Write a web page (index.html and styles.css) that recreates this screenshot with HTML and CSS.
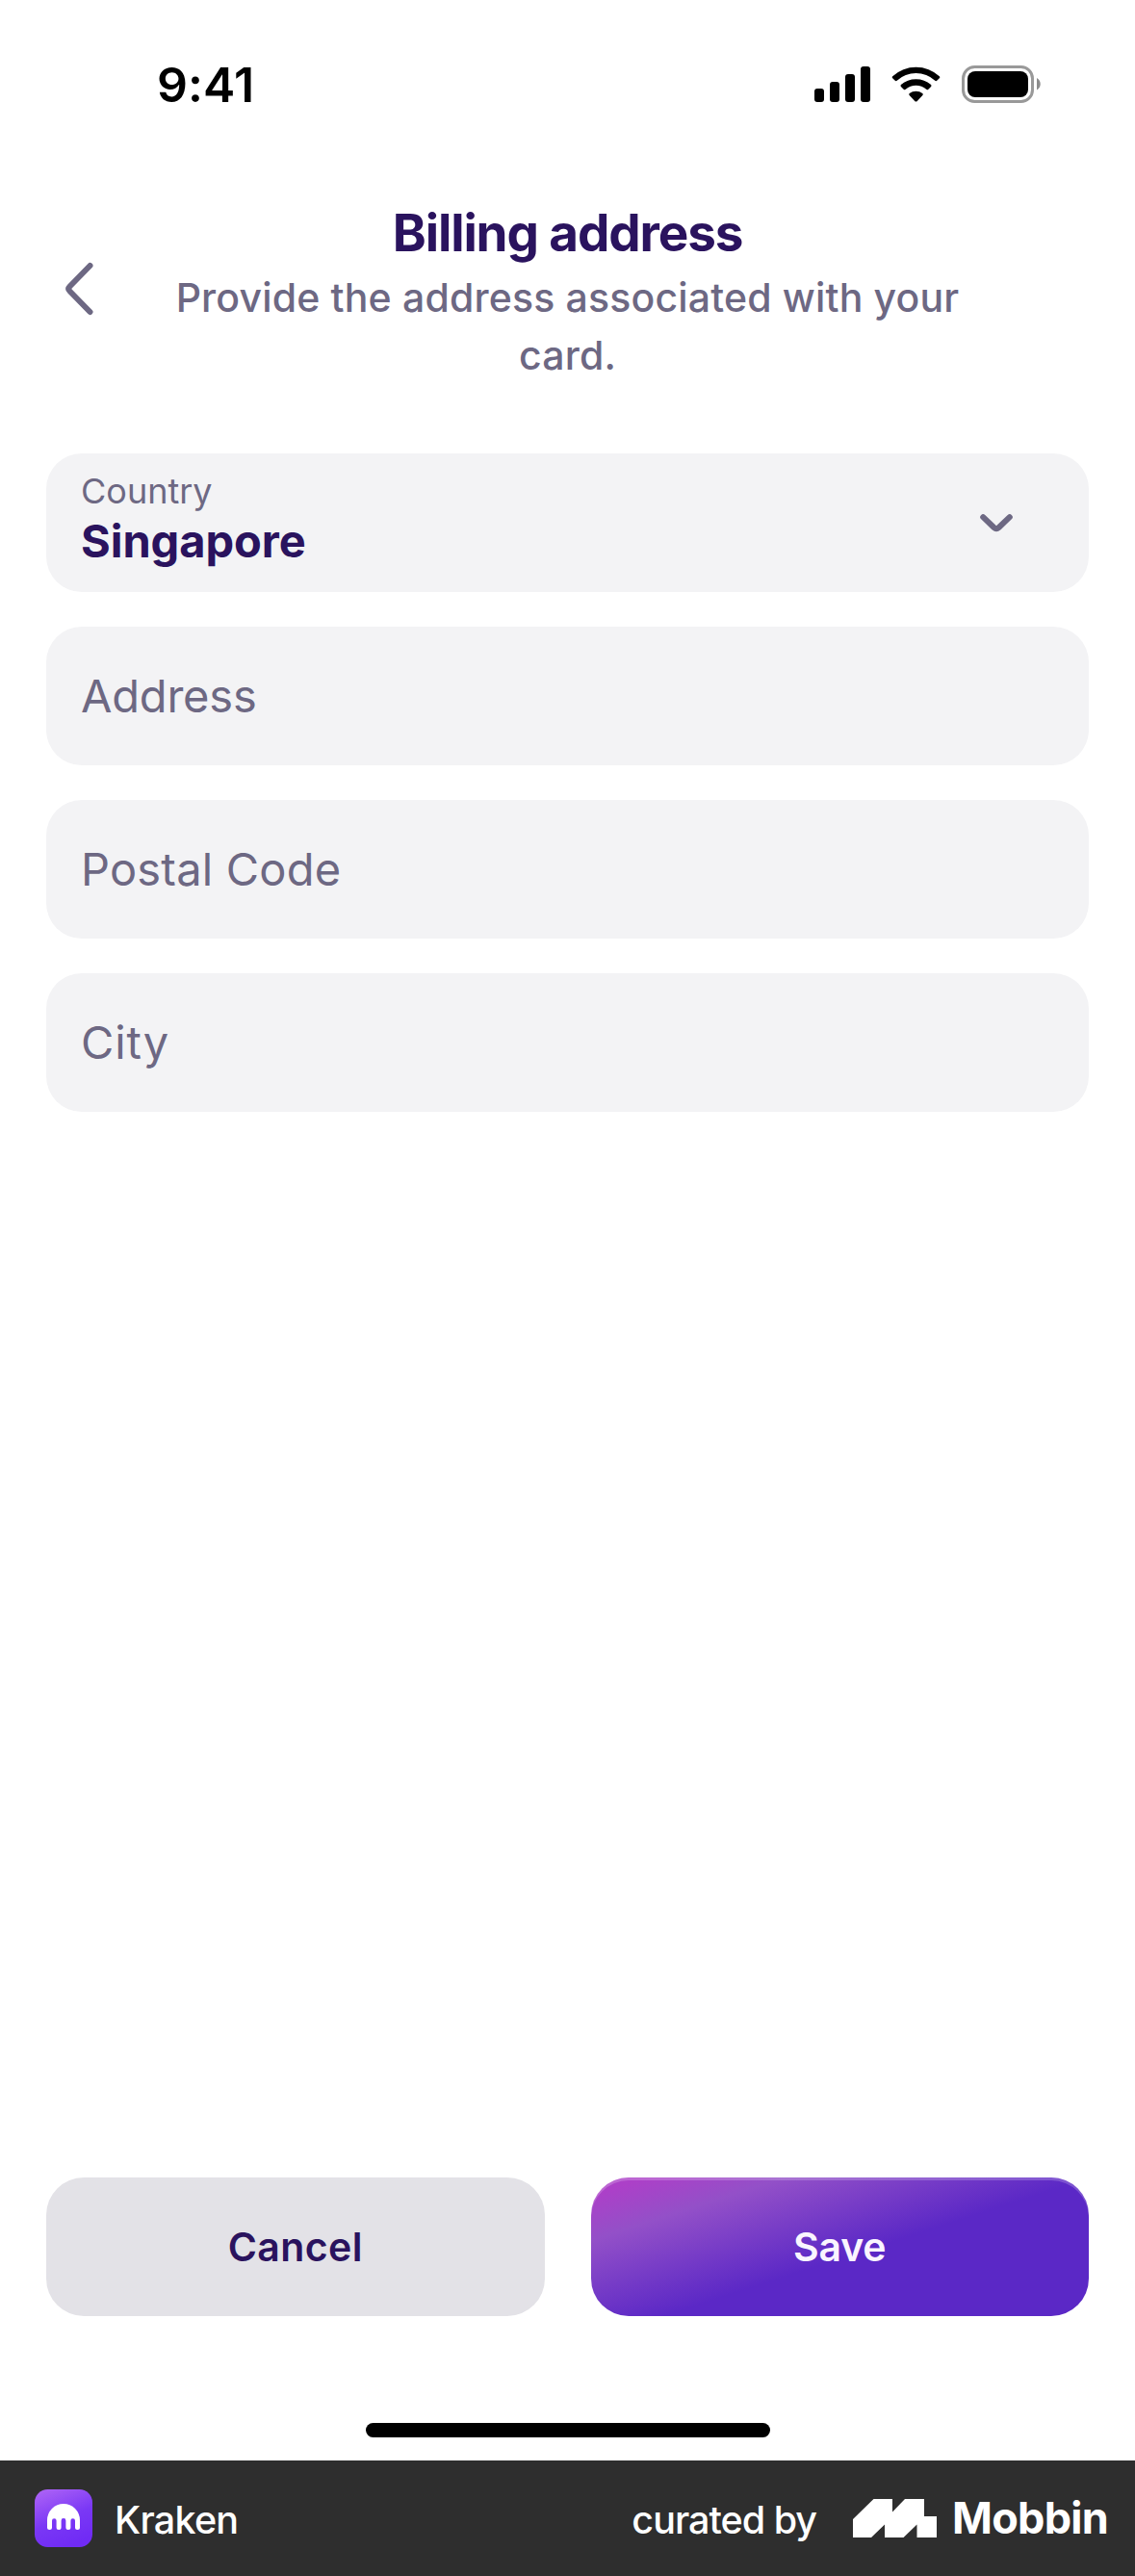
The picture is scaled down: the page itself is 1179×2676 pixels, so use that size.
FILE: index.html
```html
<!DOCTYPE html>
<html lang="en">
<head>
<meta charset="utf-8">
<title>Billing address</title>
<link rel="stylesheet" href="styles.css">
</head>
<body>
<div class="screen">
  <div class="status-bar">
    <div class="time">9:41</div>
    <svg class="status-icons" width="236" height="40" viewBox="0 0 236 40" aria-hidden="true">
      <rect x="0" y="24" width="10" height="14" rx="3"/>
      <rect x="16" y="17" width="10" height="21" rx="3"/>
      <rect x="32" y="9" width="10" height="29" rx="3"/>
      <rect x="48" y="1" width="10" height="37" rx="3"/>
      <path d="M81.200 11.200 A36 36 0 0 1 129.800 11.200 Q130.800 12.200 129.800 13.200 L127.200 15.800 Q126.300 16.600 125.300 15.700 A29.500 29.500 0 0 0 85.700 15.700 Q84.700 16.600 83.800 15.800 L81.200 13.200 Q80.200 12.200 81.200 11.200 Z"/>
      <path d="M89.900 20.100 A23.500 23.500 0 0 1 121.100 20.100 Q122 21.100 121.100 22 L118.100 24.900 Q117.200 25.700 116.200 24.800 A16.500 16.500 0 0 0 94.800 24.800 Q93.800 25.700 92.900 24.900 L89.900 22 Q89 21.100 89.900 20.100 Z"/>
      <path d="M98.700 29 A11 11 0 0 1 112.300 29 Q113.300 30 112.400 31 L106.500 37.200 Q105.500 38 104.500 37.200 L98.600 31 Q97.700 30 98.700 29 Z"/>
      <rect x="154.500" y="1.500" width="72" height="36" rx="12" fill="none" stroke="#999" stroke-width="3"/>
      <rect x="159" y="6" width="63" height="27" rx="8"/>
      <path d="M231 13 C236 15.500 236 23 231 25.500 Z" fill="#8c8c8c"/>
    </svg>
  </div>

  <header class="header">
    <svg class="back" width="33" height="58" viewBox="0 0 33 58" aria-label="Back">
      <path d="M27.500 5 L6.500 26.500 Q4 29 6.500 31.500 L27.500 53"/>
    </svg>
    <div class="heading">
      <h1 class="title">Billing address</h1>
      <p class="subtitle">Provide the address associated with your<br>card.</p>
    </div>
  </header>

  <main class="form">
    <div class="field field-select">
      <div class="select-text">
        <div class="label">Country</div>
        <div class="value">Singapore</div>
      </div>
      <svg class="caret" width="34" height="20" viewBox="0 0 34 20" aria-hidden="true">
        <path d="M3.200 4.200 L14.500 15 Q17 17.200 19.500 15 L30.800 4.200"/>
      </svg>
    </div>
    <div class="field address">Address</div>
    <div class="field postal">Postal Code</div>
    <div class="field city">City</div>
  </main>

  <div class="actions">
    <div class="button cancel">Cancel</div>
    <div class="button save">Save</div>
  </div>
  <div class="home-indicator"></div>
</div>

<footer class="footer">
  <svg class="app-icon" width="60" height="60" viewBox="0 0 60 60" aria-hidden="true">
    <defs>
      <linearGradient id="app" x1="0.150" y1="0" x2="0.550" y2="1">
        <stop offset="0" stop-color="#ac62f6"/>
        <stop offset="0.550" stop-color="#7a38f5"/>
        <stop offset="1" stop-color="#702bf5"/>
      </linearGradient>
    </defs>
    <rect width="60" height="60" rx="13.500" fill="url(#app)"/>
    <path fill="#fff" d="M13 32 A17 17 0 0 1 47 32 V39.500 A2.500 2.500 0 0 1 42 39.500 V32.500 A2.300 2.300 0 0 0 37.400 32.500 V39.500 A2.500 2.500 0 0 1 32.400 39.500 V32.500 A2.400 2.400 0 0 0 27.600 32.500 V39.500 A2.500 2.500 0 0 1 22.600 39.500 V32.500 A2.300 2.300 0 0 0 18 32.500 V39.500 A2.500 2.500 0 0 1 13 39.500 Z"/>
  </svg>
  <div class="app-name">Kraken</div>
  <div class="curated">curated by</div>
  <svg class="mobbin-mark" width="87" height="40" viewBox="0 0 87 40" aria-hidden="true">
    <path fill="#fff" d="M0 21 L21.500 0 H41 V13.500 L54 0 H74 V18 H87 V40 H66.500 V26.500 L52.500 40 H33 V26.500 L19 40 H0 Z"/>
  </svg>
  <div class="mobbin">Mobbin</div>
</footer>
</body>
</html>
```
FILE: styles.css
```css
* {
  box-sizing: border-box;
}

body {
  margin: 0;
  width: 1179px;
  height: 2676px;
  display: flex;
  flex-direction: column;
  background: #fff;
  font-family: Inter, "Liberation Sans", sans-serif;
}

.screen {
  height: 2556px;
  display: flex;
  flex-direction: column;
}

/* Status bar */
.status-bar {
  height: 212px;
  padding: 58px 97px 0 163px;
  display: flex;
  justify-content: space-between;
  align-items: flex-start;
}

.time {
  font-size: 50px;
  font-weight: 600;
  line-height: 60px;
  letter-spacing: 0.1px;
  color: #000;
}

.status-icons {
  margin-top: 10px;
}

/* Header */
.header {
  height: 259px;
  padding: 0 66px;
  display: grid;
  grid-template-columns: 33px 1fr 33px;
}

.back {
  margin-top: 59px;
}

.back path,
.caret path {
  fill: none;
  stroke: #6d6883;
  stroke-width: 6px;
  stroke-linecap: round;
  stroke-linejoin: round;
}

.heading {
  text-align: center;
}

.title {
  margin: 0;
  font-size: 53px;
  font-weight: 700;
  line-height: 60px;
  letter-spacing: -1.12px;
  color: #2a135e;
}

.subtitle {
  margin: 7px 0 0;
  font-size: 41px;
  font-weight: 500;
  line-height: 60px;
  letter-spacing: 0.17px;
  color: #6d6883;
}

/* Form */
.form {
  padding: 0 48px;
  display: flex;
  flex-direction: column;
  gap: 36px;
}

.field {
  height: 144px;
  padding: 0 36px;
  border-radius: 37px;
  display: flex;
  align-items: center;
  background: #f3f3f5;
  font-size: 47px;
  line-height: 60px;
  color: #6d6883;
}

.field-select {
  padding: 18px 79px 0 36px;
  align-items: flex-start;
  justify-content: space-between;
}

.label {
  font-size: 36px;
  line-height: 42px;
}

.value {
  margin-top: 3px;
  font-size: 47px;
  font-weight: 700;
  line-height: 56px;
  letter-spacing: -0.05px;
  color: #2a135e;
}

.caret {
  margin-top: 44px;
}

.address {
  letter-spacing: -0.2px;
}

.postal {
  letter-spacing: 0.2px;
}

.city {
  letter-spacing: 0.9px;
}

/* Bottom actions */
.actions {
  margin-top: auto;
  padding: 0 48px;
  display: grid;
  grid-template-columns: 1fr 1fr;
  gap: 48px;
}

.button {
  height: 144px;
  border-radius: 39px;
  display: flex;
  align-items: center;
  justify-content: center;
  font-size: 41px;
  font-weight: 600;
  line-height: 60px;
}

.cancel {
  background: #e3e2e7;
  color: #2a135e;
  letter-spacing: 0.41px;
}

.save {
  background: linear-gradient(162deg, #ac40c8 6%, #9350c8 21%, #5b28c6 54%);
  box-shadow: inset 0 3px 0 rgba(255, 255, 255, 0.2);
  color: #faf5ff;
  letter-spacing: -0.2px;
}

.home-indicator {
  width: 420px;
  height: 15px;
  margin: 111px auto 24px;
  border-radius: 8px;
  background: #000;
}

/* Attribution footer */
.footer {
  height: 120px;
  padding: 0 28px 0 36px;
  display: flex;
  align-items: center;
  background: #2e2e2e;
  color: #fff;
  font-size: 39.5px;
  font-weight: 500;
  line-height: 48px;
}

.app-name {
  margin-left: 23px;
  padding-top: 3px;
  letter-spacing: -0.75px;
}

.curated {
  margin-left: auto;
  padding-top: 3px;
  letter-spacing: -1px;
}

.mobbin-mark {
  margin: 0 16px 0 38px;
}

.mobbin {
  font-size: 45px;
  font-weight: 700;
  letter-spacing: -0.75px;
}
```
